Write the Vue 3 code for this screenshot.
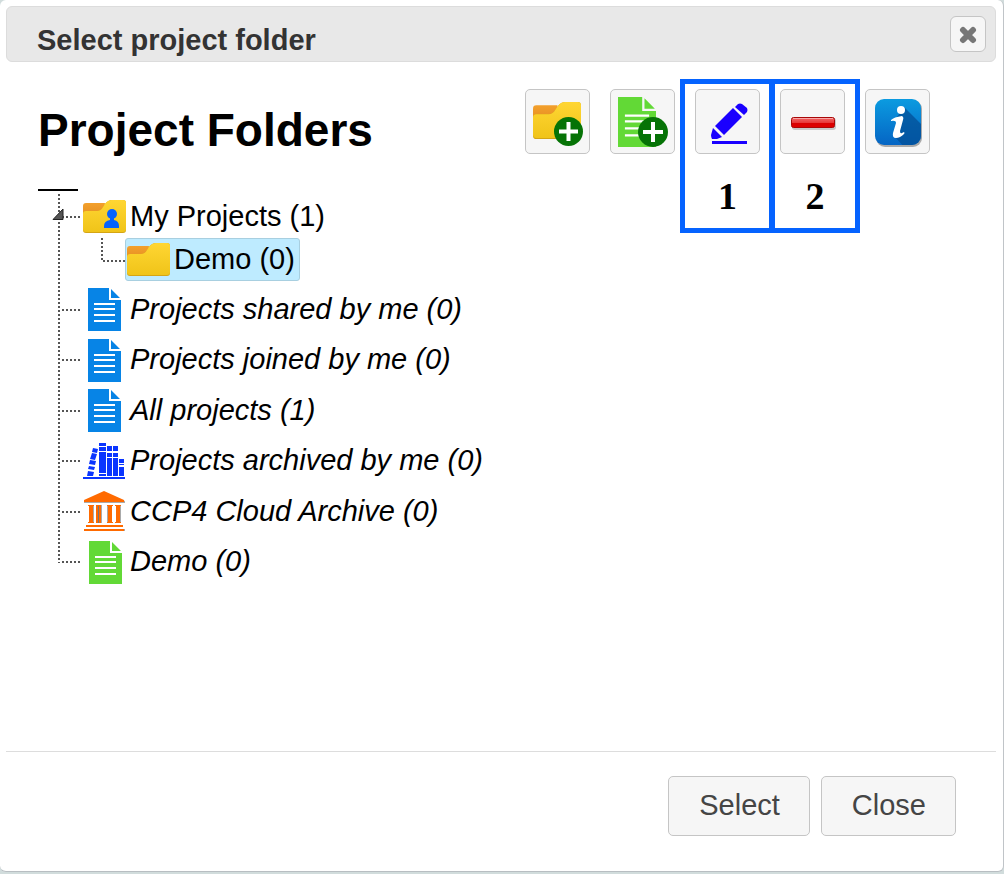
<script setup>
const folders = [
  { label: 'Projects shared by me (0)', icon: 'doc' },
  { label: 'Projects joined by me (0)', icon: 'doc' },
  { label: 'All projects (1)', icon: 'doc' },
  { label: 'Projects archived by me (0)', icon: 'books' },
  { label: 'CCP4 Cloud Archive (0)', icon: 'archive' },
  { label: 'Demo (0)', icon: 'greendoc' },
]
</script>

<template>
  <svg class="defs" aria-hidden="true">
    <defs>
      <linearGradient id="gold" x1="0" y1="0" x2="0" y2="1">
        <stop offset="0" stop-color="#ffd633" />
        <stop offset="1" stop-color="#f0c419" />
      </linearGradient>
      <linearGradient id="amber" x1="0" y1="0" x2="0" y2="1">
        <stop offset="0" stop-color="#f3a02c" />
        <stop offset="1" stop-color="#e58f22" />
      </linearGradient>
      <linearGradient id="azure" x1="0" y1="0" x2="0" y2="1">
        <stop offset="0" stop-color="#0b9be0" />
        <stop offset="1" stop-color="#0565c4" />
      </linearGradient>
      <linearGradient id="red" x1="0" y1="0" x2="0" y2="1">
        <stop offset="0" stop-color="#f06a6a" />
        <stop offset="0.5" stop-color="#e83a3a" />
        <stop offset="0.52" stop-color="#d80000" />
        <stop offset="1" stop-color="#e00000" />
      </linearGradient>
      <clipPath id="tile"><rect x="9" y="9" width="46" height="46" rx="9" /></clipPath>
      <symbol id="folder" viewBox="0 0 43 33" preserveAspectRatio="none">
        <path d="M3 3H22L20 16H0V6Q0 3 3 3Z" fill="url(#amber)" />
        <path d="M0 30V14Q0 11 3 11H14Q18 11 20 7L22 4Q25 0 29 0H40Q43 0 43 3V30Q43 33 40 33H3Q0 33 0 30Z" fill="#d5a514" />
        <path d="M0 29V14Q0 11 3 11H14Q18 11 20 7L22 4Q25 0 29 0H40Q43 0 43 3V29Q43 32 40 32H3Q0 32 0 29Z" fill="url(#gold)" />
      </symbol>
      <symbol id="page" viewBox="0 0 33 43" preserveAspectRatio="none">
        <path d="M0 0H21V12H33V43H0Z M23 1V10H32Z" fill="currentColor" />
        <path d="M6 16h21M6 21h21M6 27h21M6 33h21" stroke="#fff" stroke-width="2" />
      </symbol>
    </defs>
  </svg>

  <section class="dialog" role="dialog" aria-labelledby="dialog-title">
    <header class="titlebar">
      <h2 id="dialog-title">Select project folder</h2>
      <button class="close" aria-label="Close dialog">
        <svg width="20" height="20" viewBox="0 0 20 20"><path d="M5 6L15 16M15 6L5 16" stroke="#777" stroke-width="6" stroke-linecap="round" /></svg>
      </button>
    </header>

    <main class="content">
      <div class="heading">
        <h1>Project Folders</h1>
        <div class="toolbar">
          <div class="slot">
            <button class="tool" aria-label="Add folder">
              <svg viewBox="0 0 63 63">
                <use href="#folder" x="7" y="12" width="48" height="37" />
                <circle cx="42.500" cy="41.500" r="14.500" fill="#067306" />
                <path d="M42.500 32V51M33 41.500H52" stroke="#fff" stroke-width="4" />
              </svg>
            </button>
          </div>
          <div class="slot">
            <button class="tool" aria-label="Add list">
              <svg viewBox="0 0 63 63">
                <g class="green"><use href="#page" x="7" y="7" width="38" height="50" /></g>
                <circle cx="42" cy="42" r="15" fill="#067306" />
                <path d="M42 32V52M32 42H52" stroke="#fff" stroke-width="4" />
              </svg>
            </button>
          </div>
          <div class="slot marked">
            <button class="tool" aria-label="Rename">
              <svg viewBox="0 0 63 63" fill="#1a00ff">
                <path d="M39 17L42 14Q44 13 46 14L51 18Q52 20 51 22L48 25Z" />
                <path d="M37 18L46 27L28 45L19 36Z" />
                <path d="M17 38L26 47L21 49L16 49Q15 47 15 45Z" />
                <path d="M16 51H51V54H16Z" />
              </svg>
            </button>
            <strong>1</strong>
          </div>
          <div class="slot marked">
            <button class="tool" aria-label="Delete">
              <svg viewBox="0 0 63 63">
                <rect x="11" y="28" width="44" height="12" rx="3" fill="#aaa" opacity=".6" />
                <rect x="10.500" y="27.500" width="43" height="10" rx="2" fill="url(#red)" stroke="#a80808" />
                <path d="M12 28.500H52" stroke="#f9a5a5" />
              </svg>
            </button>
            <strong>2</strong>
          </div>
          <div class="slot">
            <button class="tool" aria-label="Information">
              <svg viewBox="0 0 63 63">
                <rect x="10" y="10" width="46" height="47" rx="9" fill="#777" opacity=".6" />
                <rect x="9" y="9" width="46" height="46" rx="9" fill="url(#azure)" />
                <path d="M38 17L60 39V60H41L29 47L33 43L31 27Z" fill="#034f96" opacity=".75" clip-path="url(#tile)" />
                <circle cx="35" cy="20" r="4" fill="#fff" />
                <path d="M25 30Q28 27 36 26Q38 27 37 30L34 41Q34 44 36 43L38 42Q39 43 38 44Q34 48 30 48Q26 48 27 43L30 33Q30 30 25 31Z" fill="#fff" />
              </svg>
            </button>
          </div>
        </div>
      </div>

      <div class="tree" role="tree">
        <div class="node first" role="treeitem" aria-expanded="true">
          <svg class="arrow" width="12" height="12" viewBox="0 0 12 12"><path d="M1 11.500L11 1V11.500Z" fill="#555" stroke="#222" /></svg>
          <svg class="icon" viewBox="0 0 43 43">
            <use href="#folder" x="0" y="5" width="43" height="33" />
            <circle cx="29" cy="19" r="5" fill="#0563ff" />
            <path d="M27 22H31V25Q36 26 36 31V33H21V31Q21 26 27 25Z" fill="#0563ff" />
          </svg>
          <span>My Projects (1)</span>
        </div>
        <div class="branch" role="group">
          <div class="selected" role="treeitem" aria-selected="true">
            <svg class="icon" viewBox="0 0 43 43"><use href="#folder" x="0" y="5" width="43" height="33" /></svg>
            <span>Demo (0)</span>
          </div>
        </div>
        <div class="list">
          <div v-for="f in folders" :key="f.label" class="node virtual" role="treeitem">
            <svg class="icon" :class="f.icon" viewBox="0 0 43 43">
              <use v-if="f.icon === 'doc'" href="#page" x="5" y="0" width="33" height="43" />
              <use v-else-if="f.icon === 'greendoc'" href="#page" x="6" y="0" width="33" height="43" />
              <g v-else-if="f.icon === 'books'" fill="#0a35ff">
                <path d="M0 37H42V39H0ZM16 3H23V6H16ZM16 7H23V11H16ZM16 12H23V33H16ZM16 34H23V36H16ZM24 6H29V11H24ZM24 13H29V17H24ZM24 18H29V36H24ZM30 6H35V11H30ZM30 13H35V17H30ZM30 18H35V36H30ZM36 19H41V23H36ZM36 24H41V25H36ZM36 27H41V36H36Z" />
                <path d="M10 8L15 9L14 13L9 12ZM9 13L14 14L12 20L7 19ZM7 20L13 21L12 25L6 24ZM6 26L12 27L11 30L5 29ZM5 31L11 32L10 36L4 36Z" />
              </g>
              <g v-else>
                <path d="M1 11L21 2L42 11V13H1ZM10 16H11V33H10ZM13 15H14V33H13ZM18 15H19V33H18ZM24 16H25V33H24ZM37 16H38V33H37ZM41 39H42V41H41Z" fill="#aaa" />
                <path d="M15 16H16V33H15Z" fill="#777" />
                <path d="M1 10L21 1L41 10V12H1ZM5 15H11V16H10V32H11V33H5V32H6V16H5ZM13 15H18V33H16V16H15V33H13ZM24 15H30V16H29V32H30V33H24V32H25V16H24ZM32 15H38V16H37V32H38V33H32V32H33V16H32ZM3 35H40V37H3ZM1 39H41V41H1Z" fill="#ff6a00" />
              </g>
            </svg>
            <span>{{ f.label }}</span>
          </div>
        </div>
      </div>
    </main>

    <footer class="actions">
      <button>Select</button>
      <button>Close</button>
    </footer>
  </section>
</template>

<style>
body { background: #d1dcdc; }
</style>

<style scoped>
* { box-sizing: border-box; }
.defs { position: absolute; width: 0; height: 0; }
.dialog {
  display: flex;
  flex-direction: column;
  min-height: calc(100vh - 2px);
  padding: 6px 7px 0 6px;
  background: #fff;
  border-right: 1px solid #c0c4c8;
  border-bottom: 1px solid #b8bec2;
  border-radius: 6px;
  font: 29px/34px "Liberation Sans", Arial, sans-serif;
  color: #000;
}
button { font: inherit; cursor: pointer; }
.titlebar {
  display: flex;
  align-items: center;
  justify-content: space-between;
  height: 56px;
  padding: 0 9px 0 30px;
  background: #e8e8e8;
  border: 1px solid #dcdcdc;
  border-radius: 6px;
}
.titlebar h2 { margin: 12px 0 0; font-size: 29px; line-height: 32px; color: #333; }
.close {
  display: grid;
  place-items: center;
  width: 36px;
  height: 36px;
  padding: 0;
  background: #f6f6f6;
  border: 1px solid #c5c5c5;
  border-radius: 6px;
}
.content { flex: 1; padding: 17px 66px 0 32px; }
.heading { display: flex; justify-content: space-between; height: 110px; }
h1 { margin: 24px 0 0; font-size: 46px; line-height: 54px; }
.toolbar { display: flex; align-items: flex-start; }
.slot { padding: 10px; }
.toolbar .slot:nth-child(2) { padding-right: 5px; }
.toolbar .slot:last-child { padding: 10px 0 0 5px; }
.tool {
  display: block;
  width: 65px;
  height: 65px;
  padding: 0;
  background: #f6f6f6;
  border: 1px solid #c5c5c5;
  border-radius: 5px;
}
.tool svg { display: block; width: 63px; height: 63px; }
.green, .greendoc { color: #62d936; }
.doc { color: #0784e6; }
.marked {
  display: flex;
  flex-direction: column;
  align-items: center;
  width: 95px;
  height: 154px;
  padding: 5px 5px 0;
  border: 5px solid #0563ff;
}
.marked + .marked { width: 91px; margin-left: -6px; border-left-width: 6px; }
.marked + .marked .tool { align-self: flex-start; }
.marked strong { margin-top: 20px; font: bold 38px/44px "Liberation Serif", "Times New Roman", serif; }
.tree { position: relative; padding-top: 6px; }
.tree::before {
  content: "";
  position: absolute;
  left: 0;
  top: 0;
  width: 40px;
  height: 2px;
  background: #000;
}
.tree::after {
  content: "";
  position: absolute;
  left: 20px;
  top: 5px;
  bottom: 21px;
  width: 2px;
  background: repeating-linear-gradient(#555 0 2px, transparent 2px 4px);
}
.node { position: relative; display: flex; align-items: center; gap: 4px; height: 43px; padding-left: 45px; }
.node span, .selected span { padding-bottom: 2px; }
.node::before {
  content: "";
  position: absolute;
  left: 24px;
  top: 21px;
  width: 19px;
  height: 2px;
  background: repeating-linear-gradient(90deg, #555 0 2px, transparent 2px 4px);
}
.arrow { position: absolute; left: 14px; top: 13px; z-index: 1; }
.icon { display: block; flex: none; width: 43px; height: 43px; }
.branch { position: relative; padding-left: 87px; }
.branch::before {
  content: "";
  position: absolute;
  left: 63px;
  top: 0;
  width: 2px;
  height: 24px;
  background: repeating-linear-gradient(#555 0 2px, transparent 2px 4px);
}
.branch::after {
  content: "";
  position: absolute;
  left: 65px;
  top: 22px;
  width: 22px;
  height: 2px;
  background: repeating-linear-gradient(90deg, #555 0 2px, transparent 2px 4px);
}
.selected {
  display: inline-flex;
  align-items: center;
  gap: 4px;
  height: 43px;
  padding: 0 4px 0 1px;
  vertical-align: top;
  background: #beebff;
  border: 1px solid #a8cfe0;
  border-radius: 3px;
}
.list { display: grid; row-gap: 7px; padding-top: 7px; }
.virtual { font-style: italic; }
.virtual:nth-child(even) { height: 44px; }
.actions {
  display: flex;
  justify-content: flex-end;
  gap: 11px;
  padding: 24px 40px 35px;
  border-top: 1px solid #ddd;
}
.actions button {
  height: 60px;
  padding: 0 29px 2px 30px;
  background: #f6f6f6;
  border: 1px solid #c5c5c5;
  border-radius: 5px;
  color: #454545;
}
</style>
